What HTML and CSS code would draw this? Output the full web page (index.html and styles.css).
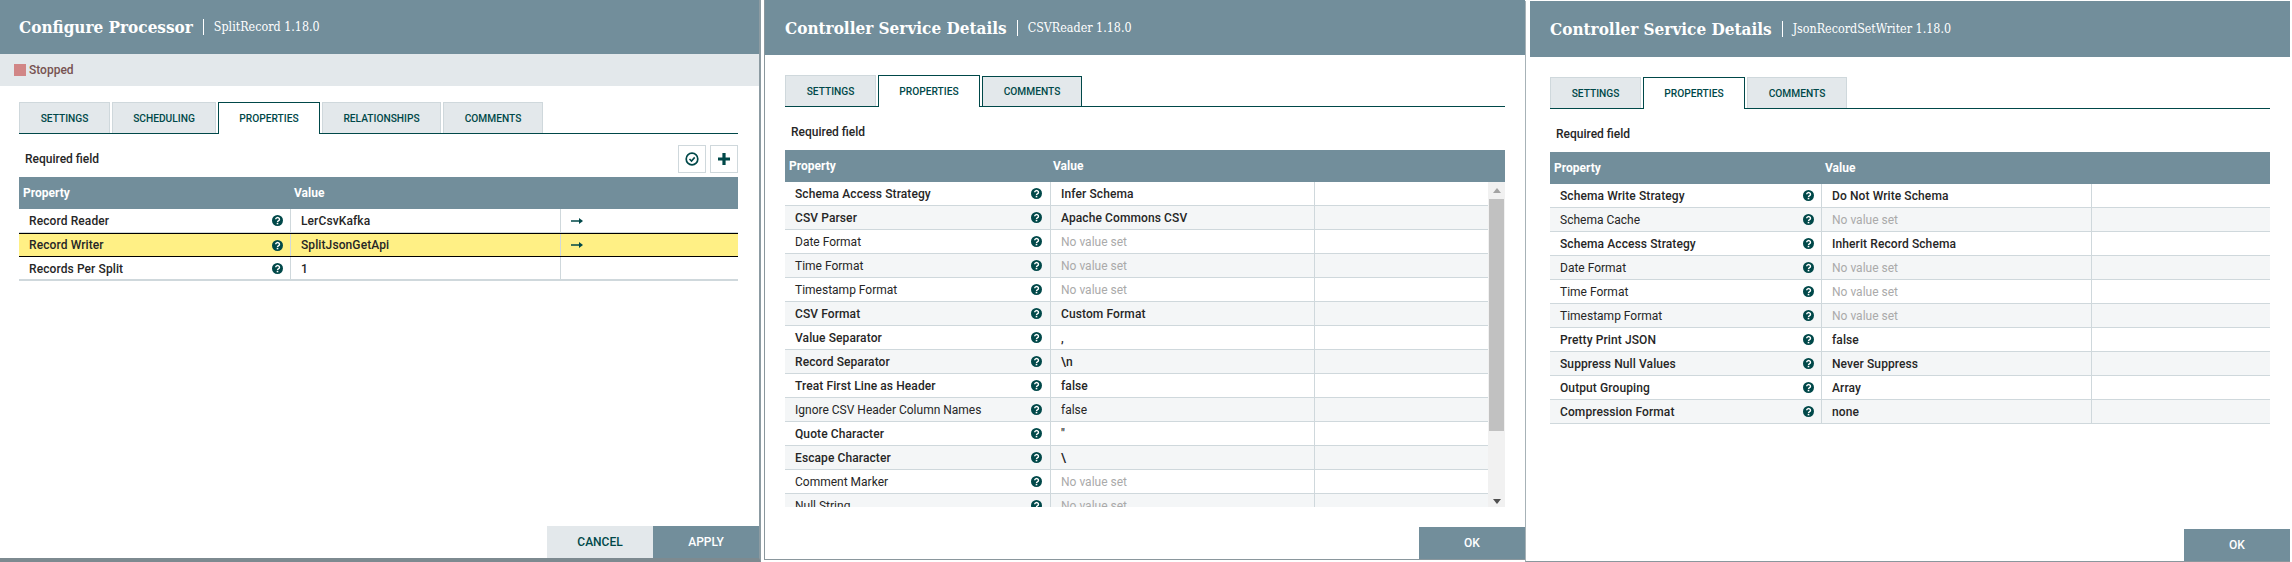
FILE: index.html
```html
<!DOCTYPE html>
<html>
<head>
  <meta charset="utf-8">
  <title>Processor and controller service dialogs</title>
  <link rel="stylesheet" href="styles.css">
</head>
<body>

  <svg class="defs" width="0" height="0">
    <symbol id="help" viewBox="0 0 11 11">
      <circle cx="5.5" cy="5.5" r="5.5" fill="#004849"/>
      <path d="M3.7 4.2a1.9 1.7 0 1 1 2.9 1.5c-.7.4-1.1.7-1.1 1.3" fill="none" stroke="#fff" stroke-width="1.4"/>
      <rect x="4.7" y="7.8" width="1.6" height="1.5" fill="#fff"/>
    </symbol>
    <symbol id="arrow" viewBox="0 0 12 8">
      <path d="M0 4h10" stroke="#004849" stroke-width="1.5"/>
      <path d="M8 1l4 3-4 3z" fill="#004849"/>
    </symbol>
  </svg>

  <main class="desk">

    <!-- processor -->
    <section class="dialog first">
      <header class="head">
        <h1>Configure Processor</h1>
        <span class="sub">SplitRecord 1.18.0</span>
      </header>
      <div class="status"><i class="stopped"></i>Stopped</div>
      <div class="content">
        <nav class="tabs">
          <a>Settings</a>
          <a class="wide-a">Scheduling</a>
          <a class="on">Properties</a>
          <a class="wide-b">Relationships</a>
          <a>Comments</a>
        </nav>
        <div class="req">
          <span>Required field</span>
          <div class="tools">
            <button>
              <svg width="14" height="14" viewBox="0 0 14 14"><circle cx="7" cy="7" r="5.8" fill="none" stroke="#004849" stroke-width="1.7"/><path d="M4.5 7l2 2 3.2-3.6" fill="none" stroke="#004849" stroke-width="1.6"/></svg>
            </button>
            <button>
              <svg width="14" height="14" viewBox="0 0 14 14"><path d="M7 1v12M1 7h12" stroke="#004849" stroke-width="3.2"/></svg>
            </button>
          </div>
        </div>
        <div class="thead"><span>Property</span><span>Value</span></div>
        <div class="row"><b>Record Reader<svg class="q"><use href="#help"/></svg></b><b>LerCsvKafka</b><span><svg class="go"><use href="#arrow"/></svg></span></div>
        <div class="row sel"><b>Record Writer<svg class="q"><use href="#help"/></svg></b><b>SplitJsonGetApi</b><span><svg class="go"><use href="#arrow"/></svg></span></div>
        <div class="row plain"><b>Records Per Split<svg class="q"><use href="#help"/></svg></b><b>1</b><span></span></div>
      </div>
      <footer class="foot">
        <button class="cancel">Cancel</button>
        <button class="ok">Apply</button>
      </footer>
    </section>

    <!-- csv reader -->
    <section class="dialog second">
      <header class="head">
        <h1>Controller Service Details</h1>
        <span class="sub">CSVReader 1.18.0</span>
      </header>
      <div class="content">
        <nav class="tabs">
          <a>Settings</a>
          <a class="on">Properties</a>
          <a class="hover">Comments</a>
        </nav>
        <div class="req"><span>Required field</span></div>
        <div class="thead"><span>Property</span><span>Value</span></div>
        <div class="scroller">
          <div class="rows">
            <div class="row"><b>Schema Access Strategy<svg class="q"><use href="#help"/></svg></b><b>Infer Schema</b><span></span></div>
            <div class="row"><b>CSV Parser<svg class="q"><use href="#help"/></svg></b><b>Apache Commons CSV</b><span></span></div>
            <div class="row"><span>Date Format<svg class="q"><use href="#help"/></svg></span><em>No value set</em><span></span></div>
            <div class="row"><span>Time Format<svg class="q"><use href="#help"/></svg></span><em>No value set</em><span></span></div>
            <div class="row"><span>Timestamp Format<svg class="q"><use href="#help"/></svg></span><em>No value set</em><span></span></div>
            <div class="row"><b>CSV Format<svg class="q"><use href="#help"/></svg></b><b>Custom Format</b><span></span></div>
            <div class="row"><b>Value Separator<svg class="q"><use href="#help"/></svg></b><b>,</b><span></span></div>
            <div class="row"><b>Record Separator<svg class="q"><use href="#help"/></svg></b><b>\n</b><span></span></div>
            <div class="row"><b>Treat First Line as Header<svg class="q"><use href="#help"/></svg></b><b>false</b><span></span></div>
            <div class="row"><span>Ignore CSV Header Column Names<svg class="q"><use href="#help"/></svg></span><span>false</span><span></span></div>
            <div class="row"><b>Quote Character<svg class="q"><use href="#help"/></svg></b><b>"</b><span></span></div>
            <div class="row"><b>Escape Character<svg class="q"><use href="#help"/></svg></b><b>\</b><span></span></div>
            <div class="row"><span>Comment Marker<svg class="q"><use href="#help"/></svg></span><em>No value set</em><span></span></div>
            <div class="row"><span>Null String<svg class="q"><use href="#help"/></svg></span><em>No value set</em><span></span></div>
          </div>
          <div class="bar">
            <i class="up"></i>
            <i class="thumb"></i>
            <i class="down"></i>
          </div>
        </div>
      </div>
      <footer class="foot">
        <button class="ok">OK</button>
      </footer>
    </section>

    <!-- json writer -->
    <section class="dialog third">
      <header class="head">
        <h1>Controller Service Details</h1>
        <span class="sub">JsonRecordSetWriter 1.18.0</span>
      </header>
      <div class="content">
        <nav class="tabs">
          <a>Settings</a>
          <a class="on">Properties</a>
          <a>Comments</a>
        </nav>
        <div class="req"><span>Required field</span></div>
        <div class="thead"><span>Property</span><span>Value</span></div>
        <div class="row"><b>Schema Write Strategy<svg class="q"><use href="#help"/></svg></b><b>Do Not Write Schema</b><span></span></div>
        <div class="row"><span>Schema Cache<svg class="q"><use href="#help"/></svg></span><em>No value set</em><span></span></div>
        <div class="row"><b>Schema Access Strategy<svg class="q"><use href="#help"/></svg></b><b>Inherit Record Schema</b><span></span></div>
        <div class="row"><span>Date Format<svg class="q"><use href="#help"/></svg></span><em>No value set</em><span></span></div>
        <div class="row"><span>Time Format<svg class="q"><use href="#help"/></svg></span><em>No value set</em><span></span></div>
        <div class="row"><span>Timestamp Format<svg class="q"><use href="#help"/></svg></span><em>No value set</em><span></span></div>
        <div class="row"><b>Pretty Print JSON<svg class="q"><use href="#help"/></svg></b><b>false</b><span></span></div>
        <div class="row"><b>Suppress Null Values<svg class="q"><use href="#help"/></svg></b><b>Never Suppress</b><span></span></div>
        <div class="row"><b>Output Grouping<svg class="q"><use href="#help"/></svg></b><b>Array</b><span></span></div>
        <div class="row"><b>Compression Format<svg class="q"><use href="#help"/></svg></b><b>none</b><span></span></div>
      </div>
      <footer class="foot">
        <button class="ok">OK</button>
      </footer>
    </section>

  </main>
</body>
</html>
```

FILE: styles.css
```css
html, body { margin: 0; padding: 0; background: #fff; }

body {
  width: 2292px;
  height: 562px;
  overflow: hidden;
  font: 12px "Roboto", "Liberation Sans", sans-serif;
  color: #262626;
}

.defs { position: absolute; }

.desk { display: flex; align-items: flex-start; }

/* dialogs */
.dialog { display: flex; flex-direction: column; flex: none; background: #fff; }

.first {
  width: 759px;
  height: 558px;
  margin-right: 3px;
  border-right: 2px solid #8c9ba2;
  border-bottom: 4px solid #7d8a90;
}

.second {
  width: 760px;
  height: 559px;
  border-left: 1px solid #8a979d;
  border-bottom: 1px solid #8a979d;
}

.third {
  width: 760px;
  height: 560px;
  margin-top: 1px;
  padding-left: 4px;
  border-left: 1px solid #a7b2b7;
  border-bottom: 1px solid #8a979d;
}

.head {
  display: flex;
  align-items: center;
  flex: none;
  height: 54px;
  padding: 0 20px 0 19px;
  background: #728e9b;
  color: #fff;
  font-family: "DejaVu Serif Condensed", "DejaVu Serif", serif;
}
.second .head { height: 55px; padding-left: 20px; }
.third .head { height: 56px; padding-left: 20px; }

.head h1 { margin: 0; font-size: 17px; font-weight: bold; }

.sub {
  margin-left: 10px;
  padding-left: 10px;
  border-left: 1px solid #fff;
  font-size: 12.4px;
  line-height: 16px;
}

.status {
  display: flex;
  align-items: center;
  height: 32px;
  padding-left: 14px;
  background: #e3e8eb;
  color: #775351;
  font-weight: 500;
}
.stopped { width: 12px; height: 12px; margin-right: 3px; background: #d18686; }

.content { padding: 16px 21px 0 19px; }
.second .content, .third .content { padding: 20px 20px 0 20px; }

/* tabs */
.tabs { display: flex; gap: 2px; height: 32px; border-bottom: 1px solid #004849; box-sizing: border-box; }

.tabs a {
  box-sizing: border-box;
  width: 91px;
  height: 31px;
  line-height: 32px;
  text-align: center;
  background: #e3e8eb;
  border: 1px solid #cfd8dc;
  border-bottom: 0;
  color: #004849;
  font-size: 10.2px;
  font-weight: 500;
  text-transform: uppercase;
}
.tabs a:last-child { width: 100px; }
.tabs .wide-a { width: 104px; }
.tabs .wide-b { width: 119px; }

.tabs .on {
  width: 102px;
  height: 32px;
  background: #fff;
  border-color: #004849;
}
.tabs .hover { height: 30px; margin-top: 1px; line-height: 30px; border-color: #004849; width: 99px; }

/* required line */
.req { display: flex; justify-content: space-between; align-items: flex-end; height: 43px; padding-bottom: 4px; box-sizing: border-box; }
.req span { align-self: flex-start; margin: 18px 0 0 6px; font-weight: 500; line-height: 14px; }

.tools { display: flex; gap: 4px; }
.tools button {
  display: flex;
  align-items: center;
  justify-content: center;
  width: 28px;
  height: 28px;
  padding: 0;
  background: #fff;
  border: 1px solid #cfd8dc;
}

/* table */
.thead, .row { display: grid; grid-template-columns: 271px 270px 1fr; }

.thead {
  height: 32px;
  line-height: 32px;
  background: #728e9b;
  color: #fff;
  font-weight: 700;
}
.thead span { padding-left: 4px; }

.row {
  box-sizing: border-box;
  height: 24px;
  line-height: 23px;
  background: #fff;
  border-bottom: 1px solid #cfd8dc;
}
.row:nth-of-type(even) { background: #f4f6f7; }
.row > * {
  position: relative;
  min-width: 0;
  padding: 1px 0 0 10px;
  font-style: normal;
}
.row > * + * { border-left: 1px solid #cfd8dc; }
.row b { font-weight: 500; letter-spacing: .1px; }
.row em { color: #aaa; }

.first .row { background: #fff; }
.first .row.sel { background: #fff085; border-top: 1px solid #000; border-bottom: 1px solid #000; line-height: 22px; }
.first .row.sel > * { padding-top: 0; }
.first .row.plain { border-bottom-width: 2px; }

.q { position: absolute; right: 7px; top: 6px; width: 11px; height: 11px; }
.go { display: inline-block; width: 12px; height: 8px; vertical-align: 0; }

/* second dialog has a scrollbar, narrower columns */
.second .thead { grid-template-columns: 264px 1fr; }
.second .row { grid-template-columns: 265px 264px 1fr; }
.second .q { right: 8px; }

.scroller { display: flex; height: 325px; overflow: hidden; }
.rows { flex: 1; }
.rows .row:nth-child(even) { background: #f4f6f7; }
.rows .row:nth-child(odd) { background: #fff; }

.bar { display: flex; flex-direction: column; align-items: center; flex: none; width: 17px; background: #f1f1f1; }
.bar i { display: block; }
.bar .up {
  width: 0; height: 0;
  margin: 6px 0 5px;
  border: 4px solid transparent;
  border-top: 0;
  border-bottom: 5px solid #a3a3a3;
}
.bar .thumb { width: 15px; height: 232px; margin-top: 1px; background: #c1c1c1; }
.bar .down {
  width: 0; height: 0;
  margin-top: 68px;
  border: 4px solid transparent;
  border-bottom: 0;
  border-top: 5px solid #505050;
}

/* footer buttons */
.foot { display: flex; justify-content: flex-end; margin-top: auto; }
.foot button {
  width: 106px;
  height: 32px;
  padding: 0;
  border: 0;
  font: 500 12px "Roboto", "Liberation Sans", sans-serif;
  text-transform: uppercase;
}
.foot .ok { background: #728e9b; color: #fff; }
.foot .cancel { background: #e3e8eb; color: #004849; }
```
